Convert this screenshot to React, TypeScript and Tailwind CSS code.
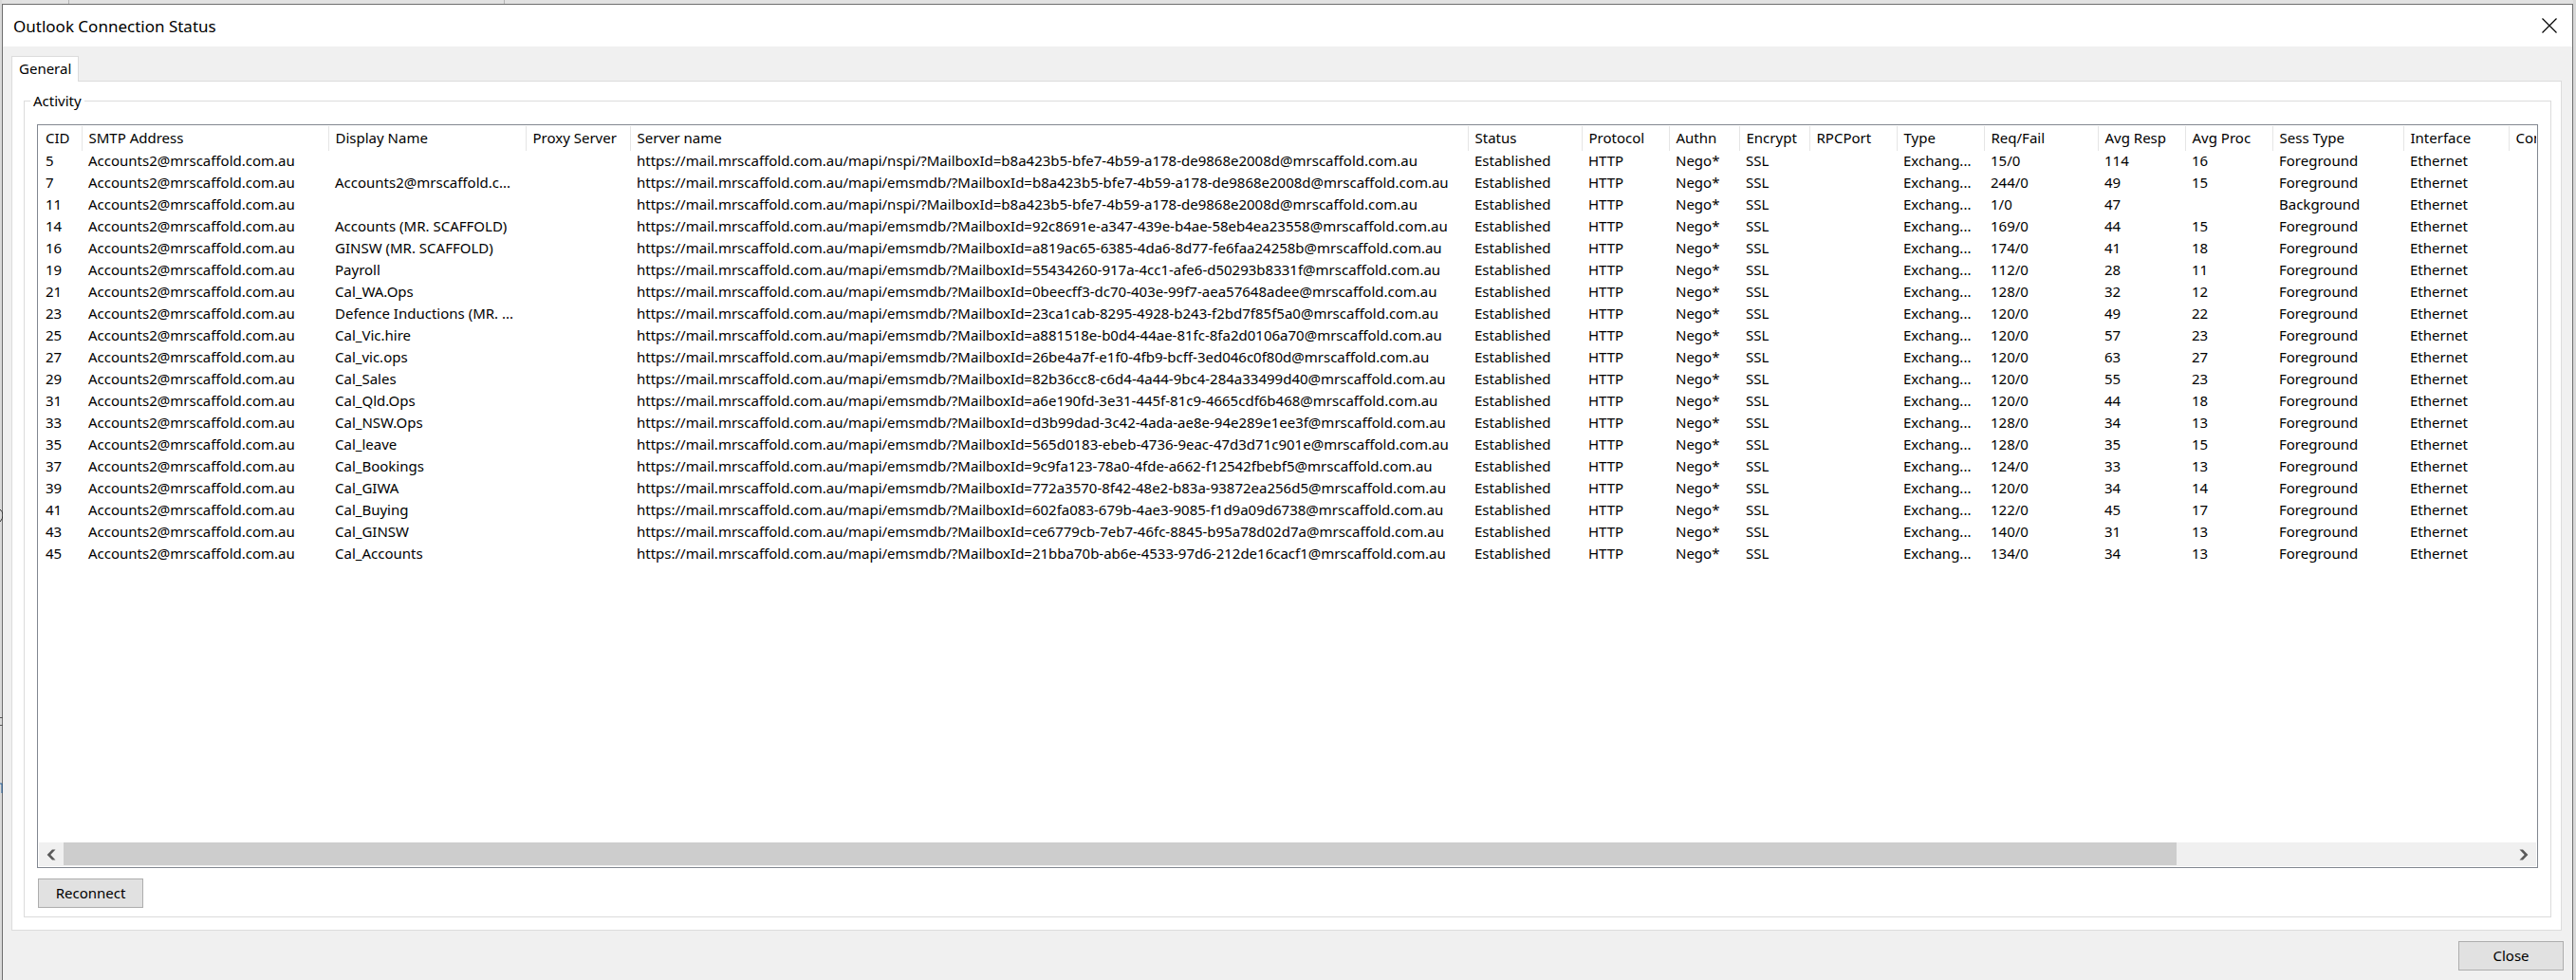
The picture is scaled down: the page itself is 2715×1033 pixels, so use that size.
import { clsx } from 'clsx';

interface Column {
  title: string;
  width: string;
}

const columns: Column[] = [
  { title: 'CID', width: 'w-[45px]' },
  { title: 'SMTP Address', width: 'w-[260px]' },
  { title: 'Display Name', width: 'w-[208px]' },
  { title: 'Proxy Server', width: 'w-[110px]' },
  { title: 'Server name', width: 'w-[883px]' },
  { title: 'Status', width: 'w-[120px]' },
  { title: 'Protocol', width: 'w-[92px]' },
  { title: 'Authn', width: 'w-[74px]' },
  { title: 'Encrypt', width: 'w-[74px]' },
  { title: 'RPCPort', width: 'w-[92px]' },
  { title: 'Type', width: 'w-[92px]' },
  { title: 'Req/Fail', width: 'w-[120px]' },
  { title: 'Avg Resp', width: 'w-[92px]' },
  { title: 'Avg Proc', width: 'w-[92px]' },
  { title: 'Sess Type', width: 'w-[138px]' },
  { title: 'Interface', width: 'w-[111px]' },
  { title: 'Conn', width: 'w-[92px]' },
];

// cid, display name, endpoint, mailbox id, req/fail, avg resp, avg proc
const connections: string[][] = [
  ['5', '', 'nspi', 'b8a423b5-bfe7-4b59-a178-de9868e2008d', '15/0', '114', '16'],
  ['7', 'Accounts2@mrscaffold.c...', 'emsmdb', 'b8a423b5-bfe7-4b59-a178-de9868e2008d', '244/0', '49', '15'],
  ['11', '', 'nspi', 'b8a423b5-bfe7-4b59-a178-de9868e2008d', '1/0', '47', ''],
  ['14', 'Accounts (MR. SCAFFOLD)', 'emsmdb', '92c8691e-a347-439e-b4ae-58eb4ea23558', '169/0', '44', '15'],
  ['16', 'GINSW (MR. SCAFFOLD)', 'emsmdb', 'a819ac65-6385-4da6-8d77-fe6faa24258b', '174/0', '41', '18'],
  ['19', 'Payroll', 'emsmdb', '55434260-917a-4cc1-afe6-d50293b8331f', '112/0', '28', '11'],
  ['21', 'Cal_WA.Ops', 'emsmdb', '0beecff3-dc70-403e-99f7-aea57648adee', '128/0', '32', '12'],
  ['23', 'Defence Inductions (MR. ...', 'emsmdb', '23ca1cab-8295-4928-b243-f2bd7f85f5a0', '120/0', '49', '22'],
  ['25', 'Cal_Vic.hire', 'emsmdb', 'a881518e-b0d4-44ae-81fc-8fa2d0106a70', '120/0', '57', '23'],
  ['27', 'Cal_vic.ops', 'emsmdb', '26be4a7f-e1f0-4fb9-bcff-3ed046c0f80d', '120/0', '63', '27'],
  ['29', 'Cal_Sales', 'emsmdb', '82b36cc8-c6d4-4a44-9bc4-284a33499d40', '120/0', '55', '23'],
  ['31', 'Cal_Qld.Ops', 'emsmdb', 'a6e190fd-3e31-445f-81c9-4665cdf6b468', '120/0', '44', '18'],
  ['33', 'Cal_NSW.Ops', 'emsmdb', 'd3b99dad-3c42-4ada-ae8e-94e289e1ee3f', '128/0', '34', '13'],
  ['35', 'Cal_leave', 'emsmdb', '565d0183-ebeb-4736-9eac-47d3d71c901e', '128/0', '35', '15'],
  ['37', 'Cal_Bookings', 'emsmdb', '9c9fa123-78a0-4fde-a662-f12542fbebf5', '124/0', '33', '13'],
  ['39', 'Cal_GIWA', 'emsmdb', '772a3570-8f42-48e2-b83a-93872ea256d5', '120/0', '34', '14'],
  ['41', 'Cal_Buying', 'emsmdb', '602fa083-679b-4ae3-9085-f1d9a09d6738', '122/0', '45', '17'],
  ['43', 'Cal_GINSW', 'emsmdb', 'ce6779cb-7eb7-46fc-8845-b95a78d02d7a', '140/0', '31', '13'],
  ['45', 'Cal_Accounts', 'emsmdb', '21bba70b-ab6e-4533-97d6-212de16cacf1', '134/0', '34', '13'],
];

function toCells([cid, name, endpoint, mailbox, reqFail, resp, proc]: string[]) {
  return [
    cid,
    'Accounts2@mrscaffold.com.au',
    name,
    '',
    `https://mail.mrscaffold.com.au/mapi/${endpoint}/?MailboxId=${mailbox}@mrscaffold.com.au`,
    'Established',
    'HTTP',
    'Nego*',
    'SSL',
    '',
    'Exchang...',
    reqFail,
    resp,
    proc,
    cid === '11' ? 'Background' : 'Foreground',
    'Ethernet',
    '',
  ];
}

function ConnectionTable() {
  return (
    <table className="w-[2695px] table-fixed border-collapse text-left leading-[21px] whitespace-nowrap">
      <colgroup>
        {columns.map((column) => (
          <col key={column.title} className={column.width} />
        ))}
      </colgroup>
      <thead>
        <tr className="h-[26px]">
          {columns.map((column) => (
            <th key={column.title} scope="col" className="border-r border-[#e5e5e5] p-0 pb-[2px] pl-[7px] font-normal">
              {column.title}
            </th>
          ))}
        </tr>
      </thead>
      <tbody>
        {connections.map((connection) => (
          <tr key={connection[0]} className="h-[23px]">
            {toCells(connection).map((cell, i) => (
              <td key={columns[i].title} className="p-0 pb-[2px] pl-[7px]">
                {cell}
              </td>
            ))}
          </tr>
        ))}
      </tbody>
    </table>
  );
}

function ScrollArrow({ direction }: { direction: 'left' | 'right' }) {
  return (
    <button
      type="button"
      aria-label={`Scroll ${direction}`}
      className="flex w-[26px] shrink-0 items-center justify-center bg-[#f0f0f0]"
    >
      <svg
        width="10"
        height="12"
        viewBox="0 0 10 12"
        fill="#5a5a5a"
        className={clsx(direction === 'right' && 'rotate-180')}
      >
        <path d="M6 .5h3.5L4.3 6l5.2 5.5H6L.6 6z" />
      </svg>
    </button>
  );
}

function PushButton({ children }: { children: string }) {
  return (
    <button
      type="button"
      className="h-[31px] w-[111px] border border-[#adadad] bg-[#e1e1e1] text-center hover:border-[#0078d7]"
    >
      {children}
    </button>
  );
}

// slivers of the window behind the dialog
function Backdrop() {
  return (
    <>
      <svg className="absolute top-0 left-0" width="540" height="4" fill="#b4b4b4" aria-hidden="true">
        <path d="M72 0h1v4h-1zM531 0h1v4h-1z" />
      </svg>
      <svg className="absolute top-[530px] left-0" width="3" height="310" fill="none" aria-hidden="true">
        <path d="M0 7q3 2 3 6t-3 7" stroke="#333" />
        <path d="M0 226.500h3M0 234.500h3" stroke="#555" />
        <path d="M0 296h2v10" stroke="#1f5a96" />
      </svg>
    </>
  );
}

export default function App() {
  return (
    <div className="relative min-h-screen bg-[#d9d9d9] pr-[3px] pl-[2px] font-['Noto_Sans','Open_Sans',sans-serif] text-[15px] leading-[23px] text-black">
      <div className="h-1 bg-[#e2e2e2]" />
      <Backdrop />
      <div className="flex min-h-[calc(100vh-4px)] flex-col border border-b-0 border-[#6e6e6e] bg-[#f0f0f0]">
        <header className="flex h-11 items-center justify-between bg-white pl-[11px]">
          <h1 className="text-[17px]">Outlook Connection Status</h1>
          <button type="button" aria-label="Close window" className="flex h-full w-12 items-center justify-center">
            <svg width="16" height="16" viewBox="0 0 16 16" fill="none" stroke="#000" strokeWidth="1.2">
              <path d="m.5.5 15 15m0-15-15 15" />
            </svg>
          </button>
        </header>

        <main className="flex grow flex-col pt-[10px] pr-[11px] pl-[9px]">
          <div role="tablist" className="flex">
            <button
              type="button"
              role="tab"
              aria-selected="true"
              className="relative z-10 -mb-px h-[27px] border border-b-0 border-[#dcdcdc] bg-white px-[7px] pb-[2px]"
            >
              General
            </button>
          </div>
          <section className="flex grow flex-col border border-[#dcdcdc] bg-white pt-5 pr-[10px] pb-[13px] pl-3">
            <div
              role="group"
              aria-labelledby="activity"
              className="flex grow flex-col border border-[#dcdcdc] px-[13px] pb-[9px]"
            >
              <h2 id="activity" className="-mt-3 -ml-[7px] self-start bg-white px-[3px]">
                Activity
              </h2>
              <div className="mt-[13px] flex grow flex-col border border-[#828790] p-px">
                <div className="grow overflow-hidden">
                  <ConnectionTable />
                </div>
                <div className="flex h-[25px] bg-[#f0f0f0]">
                  <ScrollArrow direction="left" />
                  <div className="grow">
                    <div className="h-6 w-[86.3%] bg-[#cdcdcd]" />
                  </div>
                  <ScrollArrow direction="right" />
                </div>
              </div>
              <div className="mt-[11px] ml-px">
                <PushButton>Reconnect</PushButton>
              </div>
            </div>
          </section>
        </main>

        <footer className="flex justify-end pt-[11px] pr-[9px] pb-[10px]">
          <PushButton>Close</PushButton>
        </footer>
      </div>
    </div>
  );
}
